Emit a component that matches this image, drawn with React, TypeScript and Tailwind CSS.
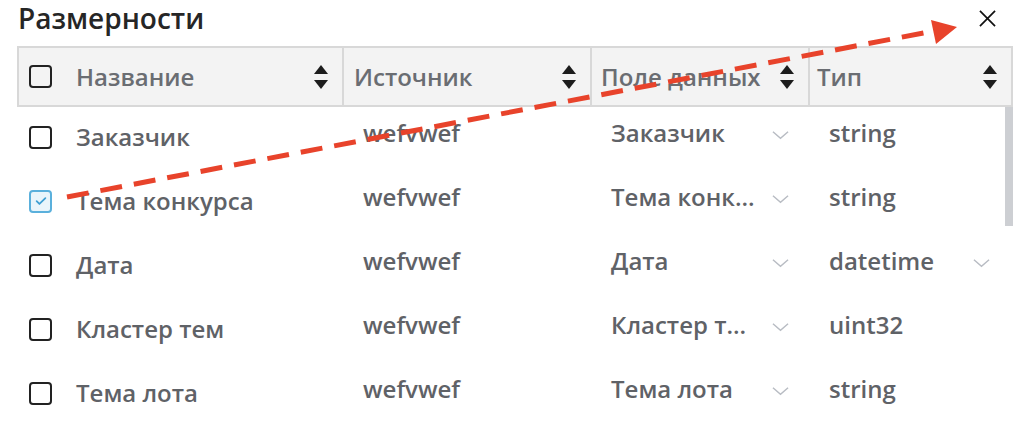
import React from 'react';

type Row = {
    name: string;
    source: string;
    field: string;
    type: string;
    checked?: boolean;
    typeSelect?: boolean;
};

const rows: Row[] = [
    { name: 'Заказчик', source: 'wefvwef', field: 'Заказчик', type: 'string' },
    { name: 'Тема конкурса', source: 'wefvwef', field: 'Тема конк...', type: 'string', checked: true },
    { name: 'Дата', source: 'wefvwef', field: 'Дата', type: 'datetime', typeSelect: true },
    { name: 'Кластер тем', source: 'wefvwef', field: 'Кластер т...', type: 'uint32' },
    { name: 'Тема лота', source: 'wefvwef', field: 'Тема лота', type: 'string' },
];

const Checkbox = ({ checked }: { checked?: boolean }) =>
    checked ? (
        <span className="flex h-[23px] w-[23px] items-center justify-center rounded-[4px] border-2 border-[#5ab0dc] bg-[#e9f5fb]">
            <svg viewBox="0 0 16 16" className="h-[14px] w-[14px]">
                <path d="M3 8.2l3.2 3.2L13 4.8" fill="none" stroke="#3d9fd3" strokeWidth="2" strokeLinecap="round" strokeLinejoin="round" />
            </svg>
        </span>
    ) : (
        <span className="block h-[23px] w-[23px] rounded-[4px] border-2 border-[#222]" />
    );

const SortIcon = () => (
    <svg viewBox="0 0 16 26" className="h-[26px] w-[16px] shrink-0">
        <path d="M8 1L15 10H1z" fill="#1c1c1c" />
        <path d="M1 16h14l-7 9z" fill="#1c1c1c" />
    </svg>
);

const Chevron = () => (
    <svg viewBox="0 0 18 10" className="mt-[4px] h-[10px] w-[17px] shrink-0">
        <path d="M1 1.5l8 7 8-7" fill="none" stroke="#b8bcc3" strokeWidth="1.5" />
    </svg>
);

const HeaderCell = ({ label, first, pl }: { label: string; first?: boolean; pl: string }) => (
    <div className={`flex items-center justify-between pr-[13px] ${pl} ${first ? '' : 'border-l-2 border-[#d8d8d8]'}`}>
        <div className="flex items-center">
            {first && (
                <span className="mr-[24px]">
                    <Checkbox />
                </span>
            )}
            <span className="whitespace-nowrap">{label}</span>
        </div>
        <SortIcon />
    </div>
);

// red annotation arrow lies over the table
const Arrow = () => (
    <svg className="pointer-events-none absolute inset-0" width="1028" height="428" viewBox="0 0 1028 428">
        <line x1="67" y1="197" x2="934" y2="31" stroke="#e8432b" strokeWidth="5" strokeDasharray="22 12" />
        <polygon points="931,20 957,27 936,44" fill="#e8432b" />
    </svg>
);

export default function App() {
    return (
        <div className="relative h-[428px] w-[1028px] overflow-hidden bg-white font-['Open_Sans',sans-serif]">
            <div className="flex h-[46px] items-start justify-between pl-[18px] pr-[32px]">
                <h2 className="-mt-[1px] text-[28px] font-semibold leading-[38px] text-[#262626]">Размерности</h2>
                <svg viewBox="0 0 18 18" className="mt-[10px] h-[17px] w-[17px]">
                    <path d="M1 1l16 16M17 1L1 17" stroke="#111" strokeWidth="1.8" />
                </svg>
            </div>

            <div className="mx-[17px] w-[996px]">
                <div className="grid h-[61px] grid-cols-[323px_248px_218px_203px] border-2 border-[#d8d8d8] bg-[#f3f3f3] text-[24px] font-semibold text-[#6a6d72]">
                    <HeaderCell label="Название" first pl="pl-[10px]" />
                    <HeaderCell label="Источник" pl="pl-[10px]" />
                    <HeaderCell label="Поле данных" pl="pl-[9px]" />
                    <HeaderCell label="Тип" pl="pl-[7px]" />
                </div>

                <div className="relative -mt-[2px]">
                    <div className="absolute right-0 top-[2px] h-[119px] w-[8px] bg-[#cdcfd3]" />
                    {rows.map((r) => (
                        <div key={r.name} className="grid h-[64px] grid-cols-[325px_248px_218px_205px] text-[24px] font-semibold text-[#5f6267]">
                            <div className="flex items-center pl-[12px]">
                                <span className="mr-[24px]">
                                    <Checkbox checked={r.checked} />
                                </span>
                                <span className="whitespace-nowrap">{r.name}</span>
                            </div>
                            <div className="flex items-center pb-[8px] pl-[21px]">
                                <span className="whitespace-nowrap">{r.source}</span>
                            </div>
                            <div className="flex items-center justify-between pb-[8px] pl-[21px] pr-[19px]">
                                <span className="whitespace-nowrap">{r.field}</span>
                                <Chevron />
                            </div>
                            <div className="flex items-center justify-between pb-[8px] pl-[21px] pr-[23px]">
                                <span className="whitespace-nowrap">{r.type}</span>
                                {r.typeSelect && <Chevron />}
                            </div>
                        </div>
                    ))}
                </div>
            </div>

            <Arrow />
        </div>
    );
}
